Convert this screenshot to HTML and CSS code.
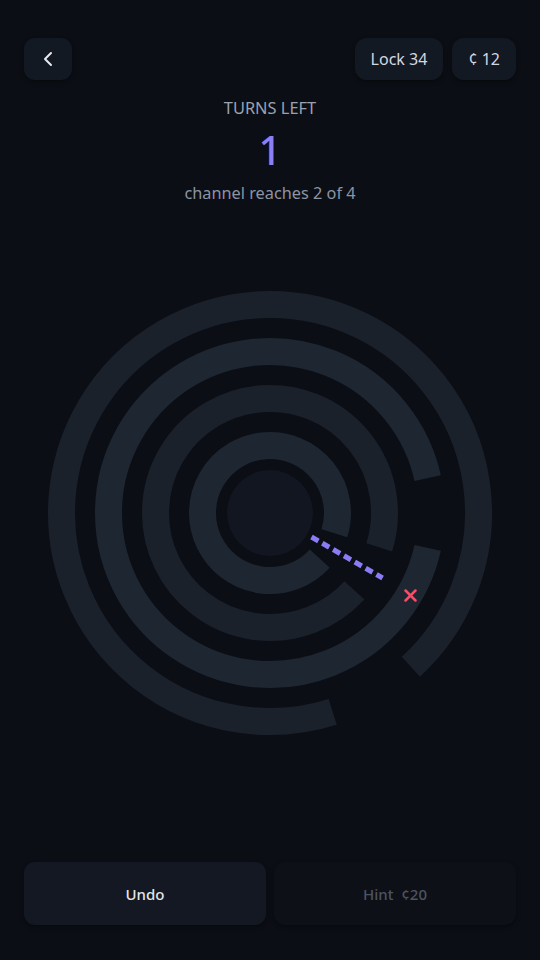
FILE: index.html
```html
<!DOCTYPE html>
<html>
<head>
  <meta charset="UTF-8">
  <title>Lock 34</title>
  <link rel="stylesheet" href="styles.css">
</head>

<body>
  <div class="screen">

    <header class="topbar">
      <button class="icon-btn" aria-label="Back">
        <svg width="12" height="16" viewBox="0 0 12 16">
          <path d="M9 2 L3 8 L9 14" fill="none" stroke="#e6e9ee" stroke-width="2" stroke-linecap="round" stroke-linejoin="round"/>
        </svg>
      </button>
      <div class="chips">
        <span class="chip">Lock 34</span>
        <span class="chip">¢ 12</span>
      </div>
    </header>

    <section class="status">
      <div class="status-label">TURNS LEFT</div>
      <div class="status-count">1</div>
      <div class="status-sub">channel reaches 2 of 4</div>
    </section>

    <div class="board">
      <svg width="460" height="460" viewBox="0 0 460 460">
        <!-- rings, innermost first; each leaves a 25deg gap -->
        <g fill="none" stroke-width="27" stroke-linecap="butt">
          <path class="ring-a" d="M279.77 275.60 A67.5 67.5 0 1 1 294.37 250.30"/>
          <path class="ring-b" d="M314.42 307.36 A114.5 114.5 0 1 1 339.20 264.43"/>
          <path class="ring-a" d="M387.67 264.95 A161.5 161.5 0 1 1 387.67 195.05"/>
          <path class="ring-b" d="M292.70 428.85 A208.5 208.5 0 1 1 370.86 383.73"/>
        </g>
        <circle class="core" cx="230" cy="230" r="43"/>

        <!-- channel path -->
        <line class="channel" x1="271.5" y1="254" x2="342.6" y2="295"/>
        <g class="blocked">
          <line x1="365.5" y1="307.5" x2="375.5" y2="317.5"/>
          <line x1="375.5" y1="307.5" x2="365.5" y2="317.5"/>
        </g>
      </svg>
    </div>

    <footer class="actions">
      <button class="action">Undo</button>
      <button class="action disabled">Hint <span class="cost">¢20</span></button>
    </footer>

  </div>
</body>

</html>
```

FILE: styles.css
```css
html, body {
  margin: 0;
  padding: 0;
}

body {
  background-color: #0b0e14;
  color: #d0d5dd;
  font-family: 'Noto Sans', 'Open Sans', sans-serif;
}

.screen {
  display: flex;
  flex-direction: column;
  height: 960px;
  box-sizing: border-box;
  padding: 38px 24px 35px;
}

.topbar {
  display: flex;
  justify-content: space-between;
  align-items: center;
  height: 42px;
}

.icon-btn {
  width: 48px;
  height: 42px;
  border: none;
  border-radius: 11px;
  background-color: #131923;
  box-shadow: 0 2px 4px rgba(0, 0, 0, 0.35);
  display: flex;
  justify-content: center;
  align-items: center;
  padding: 0;
}

.chips {
  display: flex;
  gap: 9px;
}

.chip {
  height: 42px;
  line-height: 42px;
  padding: 0 16px;
  border-radius: 12px;
  background-color: #131923;
  box-shadow: 0 2px 4px rgba(0, 0, 0, 0.35);
  font-size: 16px;
  color: #d3d8e0;
}

.status {
  margin-top: 18px;
  text-align: center;
}

.status-label {
  font-size: 16.4px;
  line-height: 20px;
  color: #9aa2b1;
}

.status-count {
  margin-top: 8px;
  font-size: 40px;
  line-height: 48px;
  font-weight: 500;
  color: #8b7ff7;
}

.status-sub {
  margin-top: 9px;
  font-size: 16.3px;
  line-height: 20px;
  color: #8b94a5;
}

.board {
  margin-top: 80px;
  display: flex;
  justify-content: center;
}

.ring-a {
  stroke: #1e2631;
}

.ring-b {
  stroke: #1a212b;
}

.core {
  fill: #111620;
}

.channel {
  stroke: #8b7cf6;
  stroke-width: 5;
  stroke-dasharray: 8 4.5;
}

.blocked line {
  stroke: #f0506a;
  stroke-width: 2.5;
  stroke-linecap: round;
}

.actions {
  margin-top: auto;
  display: flex;
  gap: 8px;
}

.action {
  flex: 1;
  height: 63px;
  border: none;
  border-radius: 11px;
  background-color: #131822;
  box-shadow: 0 2px 4px rgba(0, 0, 0, 0.35);
  font-family: 'Noto Sans', 'Open Sans', sans-serif;
  font-size: 15px;
  font-weight: 500;
  color: #e2e6ec;
}

.action.disabled {
  background-color: #0d1016;
  color: #4d5362;
}

.cost {
  margin-left: 4px;
}
```
